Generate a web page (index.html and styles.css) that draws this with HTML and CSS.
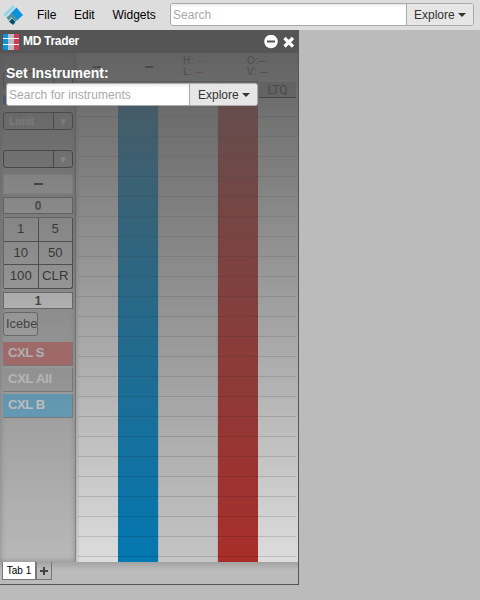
FILE: index.html
```html
<!DOCTYPE html>
<html lang="en">
<head>
<meta charset="utf-8">
<title>MD Trader</title>
<link rel="stylesheet" href="styles.css">
</head>
<body>
<header class="menubar">
  <svg class="logo" width="20" height="20" viewBox="0 0 20 20">
    <path fill="#8fd5ed" d="M0 10 10 0l2 2-9.500 9.500z"/>
    <path fill="#0a93dc" d="m7.500 8.500 6-6 6.500 7.500-6 5.500z"/>
    <path fill="#4795a0" d="m3.500 12.500 5-4.500 6 6.500-2 2-4-4-3 3z"/>
    <path fill="#07506b" d="m6 16.500 3-3 3.500 3.500-2.500 3z"/>
  </svg>
  <nav class="menu"><span class="m-file">File</span><span class="m-edit">Edit</span><span>Widgets</span></nav>
  <div class="search top-search"><div class="field">Search</div><div class="explore">Explore<i class="caret"></i></div></div>
</header>
<main class="window">
  <div class="titlebar">
    <svg width="16" height="16" viewBox="0 0 16 16"><path fill="#0a94dc" d="M0 0h5v16H0z"/><path fill="#bcbdc4" d="M5 0h6v16H5z"/><path fill="#d63a50" d="M11 0h5v16h-5z"/><path fill="#fff" d="M0 4h16v1H0zM0 10h16v1H0z"/></svg>
    <span class="title">MD Trader</span>
    <svg width="30" height="14" viewBox="0 0 30 14"><circle cx="7" cy="6.500" r="6.800" fill="#fff"/><path fill="#555" d="M3 5.500h8v2H3z"/><path stroke="#fff" stroke-width="3.300" d="m20.500 3 8.500 8.500M29 3l-8.500 8.500"/></svg>
  </div>
  <div class="body">
    <aside class="panel">
      <div class="select ghost"><b></b><i></i></div>
      <div class="check"></div>
      <div class="select limit"><b>Limit</b><i>▼</i></div>
      <div class="select second"><b></b><i>▼</i></div>
      <div class="dash"><span></span></div>
      <div class="qty">0</div>
      <div class="keys"><span>1</span><span>5</span><span>10</span><span>50</span><span>100</span><span>CLR</span></div>
      <div class="qty one">1</div>
      <div class="ice">Icebe</div>
      <div class="cxl sell">CXL S</div>
      <div class="cxl all">CXL All</div>
      <div class="cxl buy">CXL B</div>
    </aside>
    <section class="grid">
      <div class="stats">
        <span class="net"></span><span class="net"></span>
        <span class="pair">H: <em class="hi">—</em><br>L: <em class="lo">—</em></span>
        <span class="pair">O:<em>—</em><br>V: <em>—</em></span>
      </div>
      <div class="heads"><span></span><span></span><span></span><span></span><span class="ltq">LTQ</span></div>
      <div class="cols"><span></span><span class="bid"></span><span class="price"></span><span class="ask"></span><span></span></div>
    </section>
    <div class="shade"></div>
    <div class="prompt">
      <div class="label">Set Instrument:</div>
      <div class="search"><div class="field">Search for instruments</div><div class="explore">Explore<i class="caret"></i></div></div>
    </div>
  </div>
  <footer class="tabs"><span class="tab">Tab 1</span><span class="add"><svg width="8" height="8" viewBox="0 0 8 8"><path fill="#444" d="M3 0h2v3h3v2H5v3H3V5H0V3h3z"/></svg></span></footer>
</main>
</body>
</html>
```
FILE: styles.css
```css
* { box-sizing: border-box; }
body { margin: 0; height: 600px; overflow: hidden; background: #bbb; font: 12px/14px "Liberation Sans", Arial, sans-serif; color: #000; }
em, i { font-style: normal; }
.menubar { height: 30px; background: #ddd; display: flex; align-items: center; padding-left: 3px; }
.menu { display: flex; margin-left: 14px; width: 133px; white-space: nowrap; }
.m-file { width: 37px; }
.m-edit { width: 38.500px; }
.search { display: flex; height: 23px; border: 1px solid #aaa; border-radius: 3px; background: #fff; overflow: hidden; }
.top-search { width: 304px; margin-top: -1px; }
.field { flex: 1; padding-left: 2px; line-height: 22px; color: #a9a9a9; white-space: nowrap; box-shadow: inset 0 2px 2px #eee; letter-spacing: .05px; }
.explore { width: 68px; border-left: 1px solid #aaa; background: #e6e6e6; color: #333; display: flex; align-items: center; padding-left: 8px; }
.top-search .explore { width: 67px; padding-left: 7px; }
.caret { border: 4px solid transparent; border-top-color: #333; border-bottom: 0; margin-left: 3px; }
.window { width: 299px; height: 555px; border-right: 1px solid #555; border-bottom: 1px solid #555; }
.titlebar { height: 23px; background: #555; display: flex; align-items: center; padding: 0 4px 0 3px; }
.titlebar svg:first-child { margin-top: 1px; }
.title { flex: 1; margin: -1px 0 0 4px; color: #fff; font-weight: bold; letter-spacing: -.3px; }
.body { position: relative; display: flex; height: 509px; }
.panel { width: 76px; padding: 18px 3px 0; background: #bdbdbd; box-shadow: inset 0 0 6px #888, inset -1px 0 #888; }
.select { width: 70px; height: 18px; border: 1px solid #222; border-radius: 3px; background: #b8b8b8; display: flex; line-height: 17px; }
.select b { width: 50px; padding-left: 5px; border-right: 1px solid #222; font-size: 10.500px; color: #fff; }
.select i { flex: 1; text-align: center; font-size: 10px; color: #fff; }
.ghost { height: 17px; }
.check { width: 10px; height: 10px; margin: 7px 0; background: #1a6cf0; border-radius: 2px; }
.second { margin-top: 20px; }
.dash { height: 20px; margin-top: 6px; background: #e8e8e8; border: 1px solid #d0d0d0; display: flex; align-items: center; justify-content: center; }
.dash span { width: 9px; height: 1.500px; background: #222; }
.qty { height: 17px; margin-top: 3px; border: 1px solid #777; background: #e4e4e4; text-align: center; font: bold 12px/16px "Liberation Sans", Arial, sans-serif; color: #333; }
.one { background: #fff; }
.keys { display: grid; grid-template-columns: 1fr 1fr; grid-auto-rows: 23.700px; margin-top: 3px; border: 1px solid #777; border-width: 1px 0 0 1px; border-radius: 3px; color: #111; font-size: 13.200px; }
.keys span { background: #d4d4d4; border: 1px solid #444; border-width: 0 1px 1px 0; text-align: center; line-height: 22px; white-space: nowrap; }
.keys span:last-child { border-radius: 0 0 3px 0; }
.ice { width: 35px; height: 24px; margin-top: 3px; padding-left: 2px; border: 1px solid #777; border-radius: 3px; line-height: 22px; font-size: 12.800px; color: #333; overflow: hidden; background: #ccc; }
.cxl { height: 24px; margin-top: 2px; padding-left: 5px; line-height: 22px; font-size: 13px; font-weight: bold; letter-spacing: -.4px; color: #e8e8e8; background: #b4b4b4; border: 1px solid #888; border-width: 0 1px 1px 0; }
.sell { margin-top: 6px; background: #cf7676; }
.all { line-height: 21px; letter-spacing: -.25px; }
.buy { background: #68b4d8; }
.grid { width: 222px; display: flex; flex-direction: column; background: linear-gradient(90deg, rgba(0,0,0,.12), rgba(0,0,0,0) 4px), #e2e2e2; }
.stats { display: flex; height: 28px; color: #000; font-size: 10px; line-height: 11px; padding: 1px 0 0 17px; }
.net { width: 52px; flex: none; }
.net::before { content: ""; display: block; width: 8px; height: 1.500px; margin-top: 12px; background: #000; }
.pair { width: 64px; flex: none; padding-top: 1px; letter-spacing: .4px; white-space: nowrap; }
.net + .pair { margin-left: -14px; }
.pair em { display: inline-block; width: 8px; transform: scaleX(.8); transform-origin: 0 50%; }
.hi { color: #780; }
.lo { color: #e00; }
.heads, .cols { display: grid; grid-template-columns: 42px 40px 60px 40px 40px; }
.heads { height: 25px; }
.heads span { border-top: 1px solid #777; border-right: 1px solid #777; }
.heads .ltq { height: 16px; margin: 1px 2px 0 1px; background: #aaa; border: 0; border-bottom: 1px solid #000; color: #000; font: 12px/16px "Roboto", sans-serif; text-align: center; letter-spacing: 0; }
.cols { flex: 1; position: relative; }
.cols::after { content: ""; position: absolute; inset: 0 2px; background: repeating-linear-gradient(rgba(0,0,0,0) 0 10px, rgba(0,0,0,.19) 10px 11px, rgba(0,0,0,0) 11px 20px); }
.bid { background: #0079b5; }
.price { background: #cacaca; border: 1px solid #bbb; border-width: 0 1px; }
.ask { background: #ac2c28; }
.cols::after { opacity: .75; }
.shade { position: absolute; inset: 0; background: linear-gradient(rgba(85,85,85,.9), rgba(85,85,85,.04)); }
.prompt { position: absolute; left: 6px; top: 12px; width: 252px; }
.label { height: 18px; color: #fff; font: bold 14px/17px "Liberation Sans", Arial, sans-serif; letter-spacing: 0; }
.tabs { height: 22px; display: flex; padding-left: 2px; background: linear-gradient(#a2a2a2, #bbb 8px); }
.tab { width: 34px; height: 18px; background: #fff; border: 1px solid #777; border-top: 0; text-align: center; font-size: 10px; line-height: 18px; white-space: nowrap; }
.add { width: 16px; height: 18px; border: 1px solid #777; border-top: 0; display: flex; align-items: center; justify-content: center; }
```
